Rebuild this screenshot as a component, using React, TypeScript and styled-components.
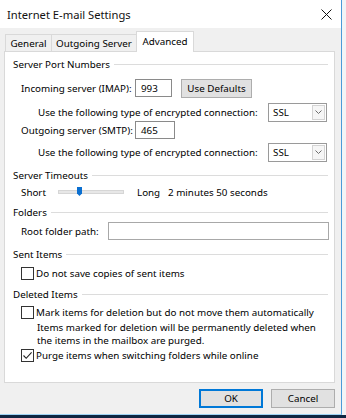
import styled, { createGlobalStyle } from "styled-components";

const GlobalStyle = createGlobalStyle`
  html, body { margin: 0; padding: 0; }
  body {
    width: 346px;
    height: 418px;
    overflow: hidden;
    background: #f4f5f6;
    font-family: "Noto Sans", "Liberation Sans", sans-serif;
    font-size: 9.8px;
    color: #000;
  }
`;

type Tab = { label: string; active?: boolean; width: number };

const tabs: Tab[] = [
  { label: "General", width: 47 },
  { label: "Outgoing Server", width: 86 },
  { label: "Advanced", width: 58, active: true },
];

export default function App() {
  return (
    <Screen>
      <GlobalStyle />
      <Top>
        <Dialog>
          <TitleBar>
            <Title>Internet E-mail Settings</Title>
            <CloseIcon />
          </TitleBar>
          <TabRow>
            {tabs.map((t, i) => (
              <TabItem key={t.label} $active={t.active} $width={t.width} $first={i === 0}>
                {t.label}
              </TabItem>
            ))}
          </TabRow>
          <Panel>
            <SectionTitle $mt={0}>Server Port Numbers</SectionTitle>
            <Row $mt={8}>
              <Label $width={114}>Incoming server (IMAP):</Label>
              <TextBox $width={37}>993</TextBox>
              <Button $ml={9} $width={71}>Use Defaults</Button>
            </Row>
            <EncryptRow $mt={8}>
              <span>Use the following type of encrypted connection:</span>
              <Select />
            </EncryptRow>
            <Row $mt={2}>
              <Label $width={114}>Outgoing server (SMTP):</Label>
              <TextBox $width={40}>465</TextBox>
            </Row>
            <EncryptRow $mt={6}>
              <span>Use the following type of encrypted connection:</span>
              <Select />
            </EncryptRow>

            <SectionTitle $mt={7}>Server Timeouts</SectionTitle>
            <Row $mt={1}>
              <Label $width={37}>Short</Label>
              <Slider $pos={18} />
              <Label $width={31} $ml={13}>Long</Label>
              <span>2 minutes 50 seconds</span>
            </Row>

            <SectionTitle $mt={4}>Folders</SectionTitle>
            <Row $mt={3}>
              <Label $width={87}>Root folder path:</Label>
              <WideBox />
            </Row>

            <SectionTitle $mt={7}>Sent Items</SectionTitle>
            <CheckRow $mt={3}>
              <CheckBox />
              <span>Do not save copies of sent items</span>
            </CheckRow>

            <SectionTitle $mt={5}>Deleted Items</SectionTitle>
            <CheckRow $mt={2}>
              <CheckBox />
              <span>Mark items for deletion but do not move them automatically</span>
            </CheckRow>
            <Note>
              Items marked for deletion will be permanently deleted when
              <br />
              the items in the mailbox are purged.
            </Note>
            <CheckRow $mt={0}>
              <CheckBox $checked />
              <span>Purge items when switching folders while online</span>
            </CheckRow>
          </Panel>
          <Footer>
            <Button $width={64} $primary>OK</Button>
            <Button $width={64}>Cancel</Button>
          </Footer>
        </Dialog>
        <Behind />
      </Top>
      <Taskbar />
    </Screen>
  );
}

function CloseIcon() {
  return (
    <svg width="11" height="11" viewBox="0 0 11 11">
      <path d="M0.5 0.5 L10.5 10.5 M10.5 0.5 L0.5 10.5" stroke="#111" strokeWidth="1" fill="none" />
    </svg>
  );
}

function Select() {
  return (
    <SelectBox>
      <span>SSL</span>
      <Arrow>
        <svg width="7" height="4" viewBox="0 0 7 4">
          <path d="M0.5 0.5 L3.5 3.5 L6.5 0.5" stroke="#6d6d6d" strokeWidth="1" fill="none" />
        </svg>
      </Arrow>
    </SelectBox>
  );
}

function Slider({ $pos }: { $pos: number }) {
  return (
    <Track>
      <Thumb style={{ left: $pos }}>
        <svg width="5" height="9" viewBox="0 0 5 9">
          <path d="M0 0 H5 V6.5 L2.5 9 L0 6.5 Z" fill="#0a6fd0" />
        </svg>
      </Thumb>
    </Track>
  );
}

function CheckBox({ $checked }: { $checked?: boolean }) {
  return (
    <Box>
      {$checked && (
        <svg width="11" height="11" viewBox="0 0 11 11">
          <path d="M1.5 5.5 L4.2 8.3 L9.6 2.4" stroke="#222" strokeWidth="1.1" fill="none" />
        </svg>
      )}
    </Box>
  );
}

const Screen = styled.div`
  width: 346px;
  height: 418px;
  display: flex;
  flex-direction: column;
`;

const Top = styled.div`
  display: flex;
  height: 415px;
`;

const Dialog = styled.div`
  width: 341px;
  height: 414px;
  background: #f0f0f0;
  border-right: 1px solid #4a9ad8;
  border-bottom: 1px solid #9ed2f2;
  display: flex;
  flex-direction: column;
`;

const Behind = styled.div`
  flex: 1;
  background: #f2f4f6;
`;

const Taskbar = styled.div`
  height: 3px;
  background: #0d2541;
`;

const TitleBar = styled.div`
  height: 28px;
  background: #fff;
  display: flex;
  align-items: center;
  justify-content: space-between;
  padding: 0 9px 0 7px;
`;

const Title = styled.div`
  font-size: 11.2px;
  color: #111;
`;

const TabRow = styled.div`
  margin-top: 3px;
  height: 20px;
  padding-left: 5px;
  display: flex;
  align-items: flex-end;
`;

const TabItem = styled.div<{ $active?: boolean; $width: number; $first?: boolean }>`
  box-sizing: border-box;
  width: ${(p) => p.$width}px;
  height: ${(p) => (p.$active ? 21 : 17)}px;
  margin-bottom: ${(p) => (p.$active ? -1 : 0)}px;
  margin-left: ${(p) => (p.$first ? 0 : -1)}px;
  border: 1px solid #d9d9d9;
  border-bottom: none;
  background: ${(p) => (p.$active ? "#fff" : "#f0f0f0")};
  position: relative;
  z-index: ${(p) => (p.$active ? 1 : 0)};
  display: flex;
  align-items: center;
  justify-content: center;
  padding-bottom: ${(p) => (p.$active ? 2 : 0)}px;
  white-space: nowrap;
`;

const Panel = styled.div`
  box-sizing: border-box;
  margin: 0 6px 0 4px;
  height: 332px;
  background: #fff;
  border: 1px solid #d9d9d9;
  padding: 4px 6px 0 8px;
  display: flex;
  flex-direction: column;
`;

const SectionTitle = styled.div<{ $mt: number }>`
  height: 16px;
  margin-top: ${(p) => p.$mt}px;
  display: flex;
  align-items: center;
  gap: 4px;
  white-space: nowrap;
  &::after {
    content: "";
    flex: 1;
    height: 1px;
    background: #dcdcdc;
  }
`;

const Row = styled.div<{ $mt: number }>`
  height: 16px;
  margin-top: ${(p) => p.$mt}px;
  padding-left: 8px;
  display: flex;
  align-items: center;
  white-space: nowrap;
`;

const EncryptRow = styled(Row)`
  padding-left: 25px;
  padding-right: 1px;
  justify-content: space-between;
`;

const CheckRow = styled(Row)`
  gap: 2px;
`;

const Label = styled.span<{ $width: number; $ml?: number }>`
  width: ${(p) => p.$width}px;
  margin-left: ${(p) => p.$ml ?? 0}px;
  flex-shrink: 0;
`;

const TextBox = styled.div<{ $width: number }>`
  box-sizing: border-box;
  width: ${(p) => p.$width}px;
  height: 18px;
  flex-shrink: 0;
  border: 1px solid #8a8a8a;
  background: #fff;
  padding-left: 5px;
  display: flex;
  align-items: center;
`;

const WideBox = styled.div`
  box-sizing: border-box;
  flex: 1;
  height: 18px;
  margin-right: -1px;
  border: 1px solid #a8a8a8;
  background: #fff;
`;

const Button = styled.div<{ $width: number; $ml?: number; $primary?: boolean }>`
  box-sizing: border-box;
  width: ${(p) => p.$width}px;
  height: 19px;
  margin-left: ${(p) => p.$ml ?? 0}px;
  flex-shrink: 0;
  background: #e1e1e1;
  border: ${(p) => (p.$primary ? "2px solid #0078d7" : "1px solid #adadad")};
  display: flex;
  align-items: center;
  justify-content: center;
  white-space: nowrap;
`;

const SelectBox = styled.div`
  box-sizing: border-box;
  width: 59px;
  height: 19px;
  border: 1px solid #9a9a9a;
  background: #fff;
  display: flex;
  align-items: center;
  justify-content: space-between;
  padding: 0 1px 0 4px;
`;

const Arrow = styled.div`
  box-sizing: border-box;
  width: 13px;
  height: 15px;
  border: 1px solid #d4d4d4;
  background: #f6f6f6;
  display: flex;
  align-items: center;
  justify-content: center;
`;

const Track = styled.div`
  position: relative;
  box-sizing: border-box;
  width: 66px;
  height: 4px;
  background: #e7e7e7;
  border: 1px solid #d6d6d6;
  flex-shrink: 0;
`;

const Thumb = styled.div`
  position: absolute;
  top: -4px;
  display: flex;
`;

const Box = styled.div`
  box-sizing: border-box;
  width: 13px;
  height: 13px;
  flex-shrink: 0;
  border: 1px solid #333;
  background: #fff;
  display: flex;
  align-items: center;
  justify-content: center;
`;

const Note = styled.div`
  margin-top: 1px;
  padding-left: 24px;
  line-height: 13px;
`;

const Footer = styled.div`
  margin-top: 6px;
  padding-right: 6px;
  display: flex;
  justify-content: flex-end;
  gap: 8px;
`;
